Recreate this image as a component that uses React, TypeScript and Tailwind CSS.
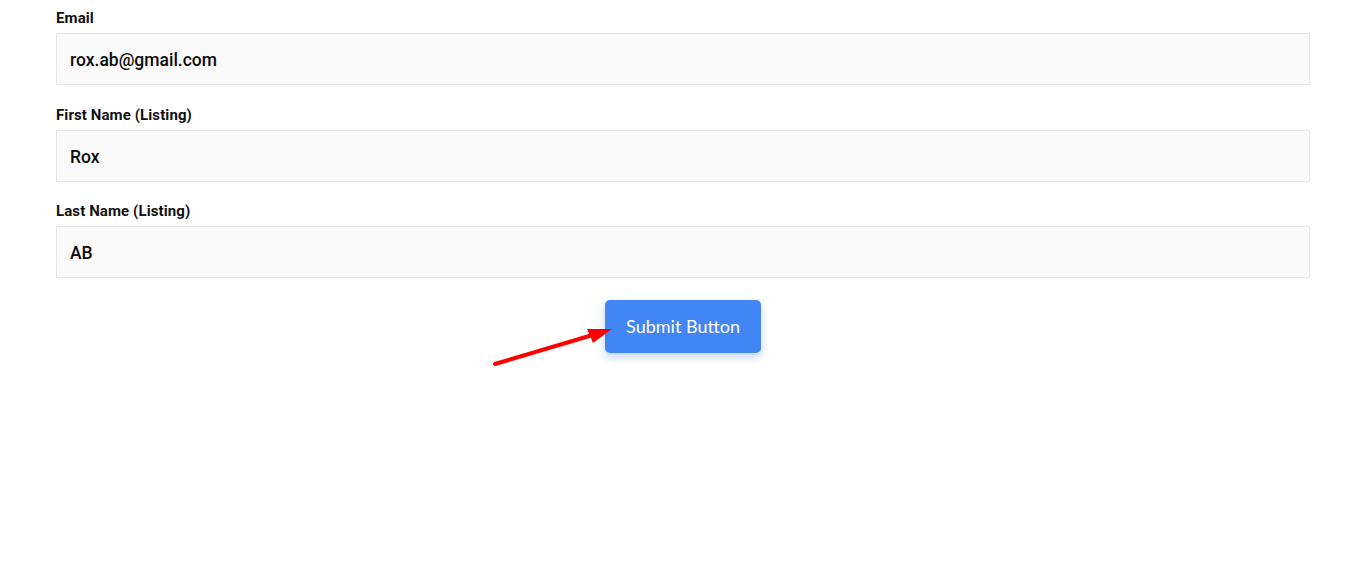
const fields = [
  { label: 'Email', value: 'rox.ab@gmail.com' },
  { label: 'First Name (Listing)', value: 'Rox' },
  { label: 'Last Name (Listing)', value: 'AB' },
];

export default function App() {
  return (
    <div className="relative min-h-[570px] bg-white pl-[56px] pr-[55px] pt-[8px] font-['Roboto',sans-serif]">
      <div className="flex flex-col gap-[19.5px]">
        {fields.map((f) => (
          <div key={f.label} className="flex flex-col">
            <label className="mb-[5px] pt-[1px] text-[15px] leading-[19px] font-bold tracking-[0.1px] text-[#111]">
              {f.label}
            </label>
            <div className="flex h-[52px] items-center border border-[#e6e6e6] bg-[#fafafa] px-[13px] pt-[3px] text-[17.5px] font-medium text-[#0a0a0a]">
              {f.value}
            </div>
          </div>
        ))}
      </div>
      <div className="mt-[22px] flex justify-center">
        <button
          type="button"
          className="h-[53px] w-[156px] rounded-[5px] bg-[#4285f4] font-['Lato',sans-serif] text-[18px] text-white shadow-[0_4px_8px_rgba(66,133,244,0.35)]"
        >
          Submit Button
        </button>
      </div>
      <svg
        className="pointer-events-none absolute left-0 top-0"
        width="1365"
        height="570"
        viewBox="0 0 1365 570"
      >
        <line x1="495" y1="364" x2="596" y2="334" stroke="#ff0000" strokeWidth="4" strokeLinecap="round" />
        <polygon points="612,329 587,329 593,343" fill="#ff0000" />
      </svg>
    </div>
  );
}
